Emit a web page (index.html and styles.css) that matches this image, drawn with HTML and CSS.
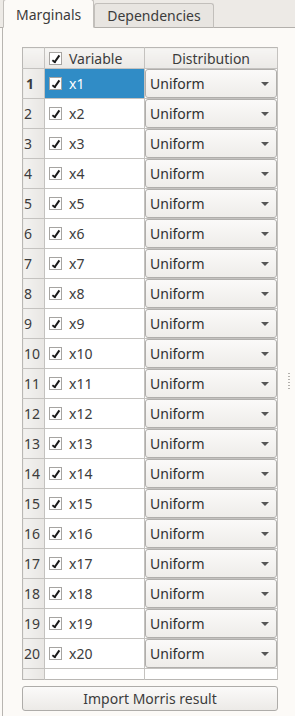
FILE: index.html
```html
<!DOCTYPE html>
<html lang="en">
<head>
    <meta charset="UTF-8">
    <title>Marginals</title>
    <link rel="stylesheet" href="styles.css">
</head>
<body>
    <div class="tabbar">
        <div class="tab active">Marginals</div>
        <div class="tab">Dependencies</div>
    </div>
    <div class="panel">
        <table class="grid">
            <colgroup>
                <col class="c-num">
                <col class="c-var">
                <col class="c-dist">
            </colgroup>
            <thead>
                <tr>
                    <th class="corner"></th>
                    <th class="var-head"><span class="check"></span>Variable</th>
                    <th class="dist-head">Distribution</th>
                </tr>
            </thead>
            <tbody id="rows"></tbody>
            <tfoot>
                <tr class="filler"><td class="num"></td><td></td><td></td></tr>
            </tfoot>
        </table>
        <button class="import">Import Morris result</button>
        <div class="handle"></div>
    </div>

    <script>
        const rows = document.getElementById('rows');
        for (let i = 1; i <= 20; i++) {
            const tr = document.createElement('tr');
            tr.innerHTML =
                '<td class="num' + (i === 1 ? ' current' : '') + '">' + i + '</td>' +
                '<td class="var' + (i === 1 ? ' selected' : '') + '"><span class="check"></span>x' + i + '</td>' +
                '<td class="dist"><div class="combo">Uniform<span class="arrow"></span></div></td>';
            rows.appendChild(tr);
        }
    </script>
</body>
</html>
```

FILE: styles.css
```css
body {
    margin: 0;
    font-family: "Noto Sans", "DejaVu Sans", sans-serif;
    font-size: 14px;
    color: #3c3c3c;
    background: #fcfaf7;
    width: 295px;
    height: 716px;
    overflow: hidden;
    position: relative;
}

.tabbar {
    display: flex;
    align-items: flex-end;
    height: 27px;
    padding-left: 3px;
    background: #edeae6;
    border-bottom: 1px solid #b3b0ac;
}

.tab {
    height: 23px;
    line-height: 23px;
    padding: 0 12px;
    margin-bottom: -1px;
    background: #e8e5e1;
    border: 1px solid #c2bfbb;
    border-bottom: 1px solid #b3b0ac;
    border-radius: 3px 3px 0 0;
    color: #3c3c3c;
}

.tab.active {
    height: 27px;
    line-height: 29px;
    background: #fcfaf7;
    border-color: #c2bfbb;
    border-bottom-color: #fcfaf7;
    padding: 0 12px;
    margin-right: 0;
}

.panel {
    margin-left: 2px;
    border-left: 1px solid #b8b5b1;
    padding: 19px 0 0 19px;
    height: 700px;
}

.grid {
    border-collapse: collapse;
    width: 256px;
    table-layout: fixed;
    background: #ffffff;
    border: 1px solid #b9b7b4;
}

.c-num {
    width: 22px;
}

.c-var {
    width: 100px;
}

.grid th {
    height: 20px;
    padding: 0;
    font-weight: normal;
    background: linear-gradient(#f6f5f3, #ebe9e6);
    border-right: 1px solid #c4c2bf;
    border-bottom: 1px solid #c4c2bf;
    color: #3c3c3c;
}

.grid th.var-head {
    text-align: left;
    padding-left: 4px;
}

.grid th.dist-head {
    text-align: center;
}

.grid td {
    height: 29px;
    padding: 0;
    border-right: 1px solid #c4c2bf;
    border-bottom: 1px solid #c4c2bf;
}

.grid td.num {
    background: linear-gradient(90deg, #f3f2f0, #e8e6e3);
    padding-left: 1px;
    color: #3c3c3c;
}

.grid td.num.current {
    font-weight: bold;
    padding-left: 3px;
}

.grid td.var {
    padding-left: 4px;
    color: #3c3c3c;
}

.grid td.var.selected {
    background: #308cc6;
    color: #ffffff;
}

.grid td.dist {
    padding: 0;
}

.grid tr.filler td {
    height: 10px;
    border-bottom: none;
}

.check {
    display: inline-block;
    width: 11px;
    height: 11px;
    border: 1px solid #a6a4a1;
    background: #ffffff;
    vertical-align: -1px;
    margin-right: 7px;
    position: relative;
}

.check::after {
    content: "";
    position: absolute;
    left: 4px;
    top: 1px;
    width: 2px;
    height: 7px;
    border: solid #1a1a1a;
    border-width: 0 2px 2px 0;
    transform: rotate(35deg);
}

.combo {
    position: relative;
    height: 27px;
    line-height: 27px;
    padding-left: 4px;
    border: 1px solid #b0aeab;
    border-radius: 3px;
    background: linear-gradient(#fbfaf9, #eeece9);
    color: #2f2f2f;
}

.arrow {
    position: absolute;
    right: 7px;
    top: 12px;
    border-left: 4px solid transparent;
    border-right: 4px solid transparent;
    border-top: 4px solid #565656;
}

.import {
    display: block;
    margin-top: 6px;
    width: 256px;
    height: 25px;
    padding: 0;
    font-family: inherit;
    font-size: 14px;
    color: #3c3c3c;
    border: 1px solid #aeaca9;
    border-radius: 3px;
    background: linear-gradient(#fbfaf9, #eceae7);
}

.handle {
    position: absolute;
    left: 288px;
    top: 373px;
    width: 2px;
    height: 17px;
    background: repeating-linear-gradient(#b3b0ac 0 1px, transparent 1px 3px);
}
```
